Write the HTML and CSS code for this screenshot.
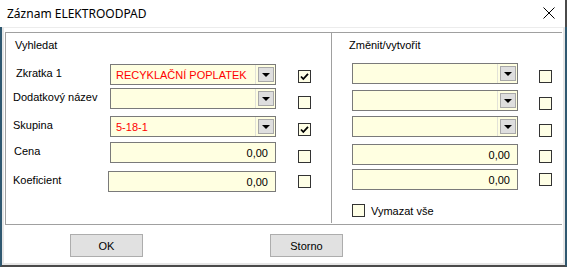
FILE: index.html
```html
<!DOCTYPE html>
<html>
<head>
    <title>Záznam ELEKTROODPAD</title>
    <meta charset="utf-8">
    <link rel="stylesheet" href="styles.css">
</head>
<body>
<div class="window">
    <div class="titlebar">
        <span class="title">Záznam ELEKTROODPAD</span>
        <svg class="close" width="12" height="12" viewBox="0 0 12 12">
            <path d="M0.5 0.5 L11.5 11.5 M11.5 0.5 L0.5 11.5" stroke="#000" stroke-width="1" fill="none"/>
        </svg>
    </div>
    <div class="client">
        <div class="group">
            <div class="panel search">
                <div class="caption">Vyhledat</div>
                <div class="rows">
                    <label class="indent">Zkratka 1</label>
                    <div class="combo red"><span class="value">RECYKLAČNÍ POPLATEK</span><span class="drop"><span class="btn"></span></span></div>
                    <span class="check on"><svg width="11" height="11" viewBox="0 0 11 11"><polyline points="2,5.5 4.3,8 9,2.8" stroke="#000" stroke-width="1.8" fill="none"/></svg></span>

                    <label>Dodatkový název</label>
                    <div class="combo"><span class="value"></span><span class="drop"><span class="btn"></span></span></div>
                    <span class="check"></span>

                    <label>Skupina</label>
                    <div class="combo red"><span class="value">5-18-1</span><span class="drop"><span class="btn"></span></span></div>
                    <span class="check on"><svg width="11" height="11" viewBox="0 0 11 11"><polyline points="2,5.5 4.3,8 9,2.8" stroke="#000" stroke-width="1.8" fill="none"/></svg></span>

                    <label class="half">Cena</label>
                    <div class="edit">0,00</div>
                    <span class="check"></span>

                    <label>Koeficient</label>
                    <div class="edit shifted">0,00</div>
                    <span class="check"></span>
                </div>
            </div>
            <div class="panel change">
                <div class="caption">Změnit/vytvořit</div>
                <div class="rows">
                    <div class="combo"><span class="value"></span><span class="drop"><span class="btn"></span></span></div>
                    <span class="check"></span>

                    <div class="combo"><span class="value"></span><span class="drop"><span class="btn"></span></span></div>
                    <span class="check"></span>

                    <div class="combo"><span class="value"></span><span class="drop"><span class="btn"></span></span></div>
                    <span class="check"></span>

                    <div class="edit">0,00</div>
                    <span class="check"></span>

                    <div class="edit">0,00</div>
                    <span class="check"></span>
                </div>
                <div class="clear-all">
                    <span class="check"></span>
                    <span>Vymazat vše</span>
                </div>
            </div>
        </div>
        <div class="buttons">
            <button>OK</button>
            <button>Storno</button>
        </div>
    </div>
</div>
</body>
</html>
```

FILE: styles.css
```css
* {
    box-sizing: border-box;
}
body {
    margin: 0;
    background: #2f5870;
    font: 11px "Liberation Sans", Arial, sans-serif;
    color: #000;
}
.window {
    width: 567px;
    height: 267px;
    display: flex;
    flex-direction: column;
    background: #fff;
}
.titlebar {
    height: 27px;
    display: flex;
    align-items: center;
    justify-content: space-between;
    padding: 0 10px 0 7px;
    border-right: 2px solid #4a4a4a;
}
.title {
    font: 12px "Noto Sans", "Open Sans", sans-serif;
    padding-bottom: 1px;
}
.close {
    display: block;
    margin-bottom: 1px;
}
.client {
    flex: 1;
    border: 2px solid #2f5870;
    border-top: 0;
    border-bottom-color: #4a4a4a;
    padding: 1px 2px 2px;
    box-shadow: inset 2px 0 #e6e6e6, inset -2px 0 #e6e6e6, inset 0 -2px #e6e6e6, inset 0 1px #ececec;
}
.group {
    margin: 4px 1px 0;
    height: 193px;
    display: grid;
    grid-template-columns: 325px 1fr;
    border: 1px solid #a0a0a0;
    border-right: 0;
}
.panel {
    display: flex;
    flex-direction: column;
}
.caption {
    line-height: 13px;
    padding-top: 6px;
}
.search .caption {
    padding-left: 9px;
}
.change {
    border-left: 1px solid #a0a0a0;
    margin-bottom: 1px;
}
.change .caption {
    padding-left: 17px;
}
.rows {
    display: grid;
    align-items: start;
}
.search .rows {
    margin-top: 12px;
    grid-template-columns: 104px 166px 35px;
    grid-template-rows: 24px 28px 26px 29px 21px;
}
.change .rows {
    margin-top: 11px;
    padding-left: 20px;
    grid-template-columns: 166px 34px;
    grid-template-rows: 27px 26px 28px 25px 21px;
}
label {
    padding: 3px 0 0 7px;
    line-height: 13px;
    white-space: nowrap;
}
label.indent {
    padding-left: 10px;
}
label.half {
    padding-left: 8px;
}
.combo, .edit {
    height: 21px;
    border: 1px solid #7a7a7a;
    background: #ffffe1;
    display: flex;
    align-items: center;
}
.combo .value {
    flex: 1;
    padding-left: 5px;
    white-space: nowrap;
}
.combo.red {
    color: #ff0000;
}
.drop {
    align-self: stretch;
    display: flex;
    align-items: center;
    padding: 0 1px 0 2px;
    border-left: 1px solid #e2e2d8;
}
.btn {
    width: 16px;
    height: 15px;
    background: #dedede;
    border: 1px solid #a8a8a8;
    display: flex;
    align-items: center;
    justify-content: center;
}
.btn::after {
    content: "";
    border-top: 4px solid #000;
    border-left: 4px solid transparent;
    border-right: 4px solid transparent;
    margin-top: 1px;
}
.edit {
    justify-content: flex-end;
    padding-right: 7px;
}
.edit.shifted {
    margin-left: -2px;
}
.check {
    width: 13px;
    height: 13px;
    border: 1px solid #333;
    background: #ffffe6;
    align-self: center;
    justify-self: end;
    display: flex;
    align-items: center;
    justify-content: center;
}
.check svg {
    display: block;
}
.clear-all {
    margin-top: 14px;
    padding-left: 20px;
    display: flex;
    align-items: center;
    gap: 6px;
}
.buttons {
    display: flex;
    gap: 127px;
    margin: 9px 0 0 66px;
}
button {
    width: 73px;
    height: 23px;
    background: #e1e1e1;
    border: 1px solid #adadad;
    font: 11px "Liberation Sans", Arial, sans-serif;
    color: #000;
    padding: 0;
}
```
